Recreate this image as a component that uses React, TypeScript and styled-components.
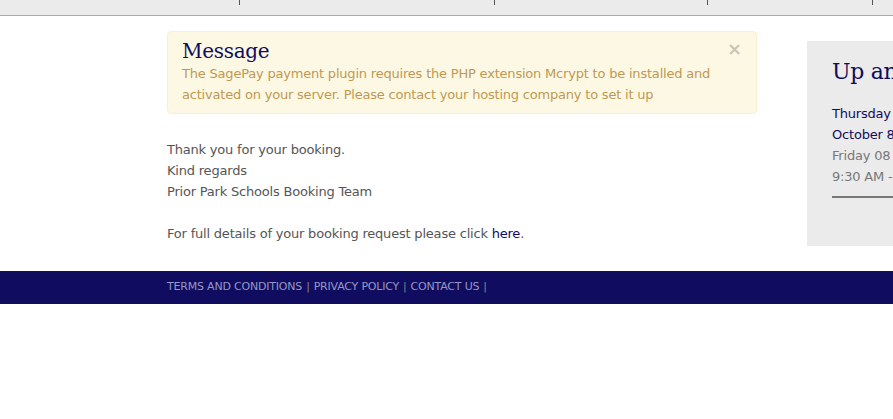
import React from "react";
import styled, { createGlobalStyle } from "styled-components";

const Global = createGlobalStyle`
  html, body { margin: 0; padding: 0; background: #fff; overflow: hidden; }
  body { font-family: "DejaVu Sans", Verdana, sans-serif; font-size: 13px; letter-spacing: -0.2px; color: #555; }
`;

const TopBar = styled.div`
  height: 15px;
  background: #ebebeb;
  border-bottom: 1px solid #aaa;
  display: flex;
  align-items: flex-start;
`;

const NavTick = styled.div<{ $w: number }>`
  width: ${(p) => p.$w}px;
  height: 5px;
  border-right: 1px solid #555;
  box-sizing: border-box;
  flex: none;
`;

const Page = styled.div`
  display: flex;
  align-items: flex-start;
  padding-left: 167px;
  gap: 50px;
  width: 1200px;
`;

const Main = styled.div`
  width: 590px;
  flex: none;
  padding-top: 15px;
`;

const Alert = styled.div`
  position: relative;
  background: #fcf8e3;
  border: 1px solid #fbeed5;
  border-radius: 4px;
  padding: 7px 35px 8px 14px;
  color: #c09853;
  line-height: 21px;
`;

const AlertTitle = styled.h4`
  margin: 0;
  font-family: "DejaVu Serif", Georgia, serif;
  font-weight: normal;
  font-size: 20px;
  letter-spacing: -0.3px;
  line-height: 24px;
  color: #100c60;
`;

const Close = styled.span`
  position: absolute;
  top: 8px;
  right: 14px;
  font-size: 18px;
  font-weight: bold;
  line-height: 18px;
  color: #000;
  opacity: 0.2;
`;

const Body = styled.div`
  margin-top: 25px;
  line-height: 21px;
  color: #555;
`;

const Line = styled.div``;

const Spacer = styled.div`
  height: 21px;
`;

const Link = styled.a`
  color: #100c60;
  text-decoration: none;
`;

const Sidebar = styled.div`
  flex: none;
  width: 240px;
  margin-top: 25px;
  background: #ebebeb;
  padding: 16px 25px 48px;
  box-sizing: border-box;
`;

const SideTitle = styled.h3`
  margin: 0 0 16px;
  font-family: "DejaVu Serif", Georgia, serif;
  font-weight: normal;
  font-size: 22px;
  letter-spacing: -0.3px;
  line-height: 30px;
  color: #100c60;
  white-space: nowrap;
`;

const EventLine = styled.div<{ $accent?: boolean }>`
  line-height: 21px;
  white-space: nowrap;
  color: ${(p) => (p.$accent ? "#100c60" : "#777")};
`;

const Rule = styled.hr`
  margin: 9px 0 0;
  border: 0;
  border-top: 2px solid #777;
`;

const Footer = styled.div`
  margin-top: 25px;
  height: 33px;
  background: #100c60;
  display: flex;
  align-items: center;
  padding-left: 167px;
  padding-bottom: 2px;
  box-sizing: border-box;
  font-size: 11px;
  letter-spacing: -0.2px;
  color: #9598c4;
  text-transform: uppercase;
`;

const FootLink = styled.span``;

const Sep = styled.span`
  color: #8a8a7a;
  margin: 0 4px;
`;

export default function App() {
  return (
    <>
      <Global />
      <TopBar>
        <NavTick $w={240} />
        <NavTick $w={255} />
        <NavTick $w={213} />
        <NavTick $w={165} />
      </TopBar>
      <Page>
        <Main>
          <Alert>
            <Close>×</Close>
            <AlertTitle>Message</AlertTitle>
            The SagePay payment plugin requires the PHP extension Mcrypt to be installed and
            activated on your server. Please contact your hosting company to set it up
          </Alert>
          <Body>
            <Line>Thank you for your booking.</Line>
            <Line>Kind regards</Line>
            <Line>Prior Park Schools Booking Team</Line>
            <Spacer />
            <Line>
              For full details of your booking request please click <Link href="#">here</Link>.
            </Line>
          </Body>
        </Main>
        <Sidebar>
          <SideTitle>Up and Coming</SideTitle>
          <EventLine $accent>Thursday Open Morning</EventLine>
          <EventLine $accent>October 8 2015</EventLine>
          <EventLine>Friday 08 October 2015</EventLine>
          <EventLine>9:30 AM - 12:00 PM</EventLine>
          <Rule />
        </Sidebar>
      </Page>
      <Footer>
        <FootLink>Terms and Conditions</FootLink>
        <Sep>|</Sep>
        <FootLink>Privacy Policy</FootLink>
        <Sep>|</Sep>
        <FootLink>Contact Us</FootLink>
        <Sep>|</Sep>
      </Footer>
    </>
  );
}
